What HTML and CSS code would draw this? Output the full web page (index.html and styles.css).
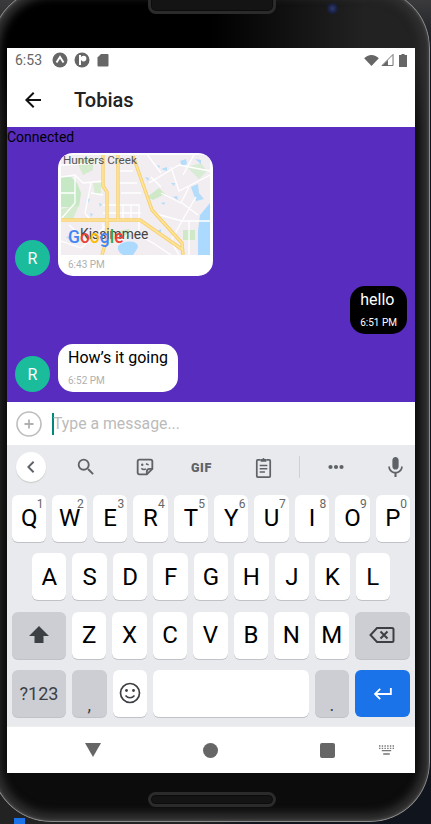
FILE: index.html
```html
<!DOCTYPE html>
<html lang="en">
<head>
<meta charset="utf-8">
<title>Tobias</title>
<link rel="stylesheet" href="styles.css">
</head>
<body>
<div class="device">
  <div class="speaker speaker-top"></div>
  <div class="camera"></div>
  <div class="speaker speaker-bottom"></div>
  <main class="screen">
    <div class="status">
      <span class="clock">6:53</span>
      <svg class="st-ic" viewBox="0 0 16 16"><circle cx="8" cy="8" r="7.5" fill="#666"/><path d="M4.5 10.5 8 5l3.5 5.5" fill="none" stroke="#fff" stroke-width="2"/></svg>
      <svg class="st-ic" viewBox="0 0 16 16"><circle cx="8" cy="8" r="7.5" fill="#666"/><rect x="5" y="3" width="2" height="10" fill="#fff"/><circle cx="9.6" cy="6.600" r="2.800" fill="#fff"/></svg>
      <svg class="st-ic st-sd" viewBox="0 0 14 14"><path d="M5 1h6.500a1 1 0 0 1 1 1v10.500a1 1 0 0 1-1 1h-9a1 1 0 0 1-1-1V4.500z" fill="#666"/></svg>
      <span class="status-fill"></span>
      <svg class="st-wifi" viewBox="0 0 16 12"><path d="M8 12 0 3.5C2 1.5 4.8 0 8 0s6 1.500 8 3.500z" fill="#666"/></svg>
      <svg class="st-signal" viewBox="0 0 13 13"><path d="M12.500 .5v12H.5z" fill="none" stroke="#666"/><path d="M7 6.500V13H.5z" fill="#666"/></svg>
      <svg class="st-batt" viewBox="0 0 8 13"><path d="M2.500 0h3v1H8v12H0V1h2.500z" fill="#666"/></svg>
    </div>
    <header class="appbar">
      <svg class="back" viewBox="0 0 24 24"><path d="M20 11H7.830l5.590-5.590L12 4l-8 8 8 8 1.410-1.410L7.830 13H20v-2z"/></svg>
      <h1 class="title">Tobias</h1>
    </header>
    <section class="chat">
      <div class="connected">Connected</div>
      <div class="msg msg-first">
        <div class="avatar">R</div>
        <div class="bubble bubble-map">
          <svg class="map" viewBox="0 2 149 100">
            <rect x="0" y="0" width="149" height="102" fill="#f2edf1"/>
            <path d="M0 24h10l6 6 4 10-2 14H0z" fill="#c7e8c4"/>
            <path d="M14 5h18v12L22 22z" fill="#d5ebcd"/>
            <path d="M32 30h8v10l-6 2z" fill="#d8ecd2"/>
            <path d="M86 44l12-9 6 6-12 6z" fill="#cfe9c8"/>
            <path d="M126 14l14-4 6 8-8 8z" fill="#d8ecd5"/>
            <path d="M0 56 18 52 12 66H0z" fill="#d5ebcd"/>
            <path d="M58 78l10-2 2 8-10 2z" fill="#cfe9c8"/>
            <path d="M149 50 139 62 137 78 137 102H149z" fill="#acdafe"/>
            <path d="M57 93q6-6 16-4 6 3 3 7l-4 6H62q-6-3-5-9z" fill="#acdafe"/>
            <path d="M130 34l7-3 1 9 5 6-8 2z" fill="#b4dcfb"/>
            <path d="M100 16l6-2v4zM112 44l4-1 1 4zM26 45l3 1-2 4zM84 24l4 1-1 3zM5 84l4-1v4zM96 78l4-2v4zM134 6l6 1v4zM38 50l3 1-2 3zM119 8l6-2 1 5-5 2zM110 30l4 0-1 3zM29 60l3 1-2 3zM96 12l3 1-1 2zM100 50l4-1-1 3z" fill="#b4dcfb"/>
            <path d="M122 77h12v10h-12z" fill="#cfe8c8"/>
            <g class="roads">
              <path d="M0 24 14 22 22 30 42 28M14 22V50L0 66M30 30 24 60 30 68M57 30H76M42 52H78V80M42 60H80M42 70V102M30 68H0M62 52V67M70 52V67M20 95 46 72M88 30 118 12 149 18M110 14 118 38 149 22M100 40 120 50 128 34M121 68H149M121 68 110 88 118 102M121 68 135 44M60 88 70 78 92 90 110 102M0 40 14 40M85 0 100 20M134 0 122 22M0 12 40 10M57 18H72M92 60 121 68M128 68V102M100 34 90 24M8 72 28 90M0 88 20 95M60 40H80M30 40 42 42M137 62 121 50"/>
            </g>
            <g class="hw">
              <path d="M42 0V33L46 39V85L41 102M57 0V67M72 3 91 57 121 90 122 102M0 67H79L122 97"/>
            </g>
            <g class="hw-in">
              <path d="M42 0V33L46 39V85L41 102M57 0V67M72 3 91 57 121 90 122 102M0 67H79L122 97"/>
            </g>
            <text class="map-small" x="2" y="11">Hunters Creek</text>
            <text class="map-big" x="19" y="86">Kissimmee</text>
            <text class="map-logo" x="7" y="90"><tspan fill="#4285f4">G</tspan><tspan fill="#ea4335">o</tspan><tspan fill="#fbbc05">o</tspan><tspan fill="#4285f4">g</tspan><tspan fill="#34a853">l</tspan><tspan fill="#ea4335">e</tspan></text>
          </svg>
          <div class="time time-map">6:43 PM</div>
        </div>
      </div>
      <div class="msg msg-mine">
        <div class="bubble bubble-mine">
          <div class="text">hello</div>
          <div class="time">6:51 PM</div>
        </div>
      </div>
      <div class="msg">
        <div class="avatar">R</div>
        <div class="bubble">
          <div class="text">How’s it going</div>
          <div class="time">6:52 PM</div>
        </div>
      </div>
    </section>
    <div class="composer">
      <svg class="plus" viewBox="0 0 26 26"><circle cx="13" cy="13" r="12" fill="none" stroke="#bdbdbd" stroke-width="1.600"/><path d="M13 8.500v9M8.500 13h9" stroke="#b0b0b0" stroke-width="1.800"/></svg>
      <span class="caret"></span>
      <span class="placeholder">Type a message...</span>
    </div>
    <section class="keyboard">
      <div class="tools">
        <div class="tool-back"><svg class="tool-chev" viewBox="0 0 12 16"><path d="M9 2 3 8l6 6" fill="none" stroke="#5f6368" stroke-width="2.200"/></svg></div>
        <svg class="tool tool-search" viewBox="0 0 24 24"><path d="M15.500 14h-.79l-.28-.27A6.471 6.471 0 0 0 16 9.500 6.500 6.500 0 1 0 9.500 16c1.610 0 3.090-.59 4.230-1.570l.27.28v.79l5 4.990L20.490 19l-4.990-5zm-6 0C7.010 14 5 11.990 5 9.500S7.010 5 9.500 5 14 7.010 14 9.500 11.990 14 9.500 14z" fill="#5f6368"/></svg>
        <svg class="tool tool-sticker" viewBox="0 0 24 24"><path d="M6 4h12a2 2 0 0 1 2 2v8l-6 6H6a2 2 0 0 1-2-2V6a2 2 0 0 1 2-2z" fill="none" stroke="#5f6368" stroke-width="2"/><path d="M14 20v-3a3 3 0 0 1 3-3h3" fill="none" stroke="#5f6368" stroke-width="2"/><circle cx="9" cy="9.500" r="1.300" fill="#5f6368"/><path d="M13 8.500l3 1.200M8 13.500c2 1.500 3.500 1.500 5 .5" fill="none" stroke="#5f6368" stroke-width="1.700"/></svg>
        <span class="tool-gif">GIF</span>
        <svg class="tool tool-clip" viewBox="0 0 24 24"><path d="M9 4H6a1 1 0 0 0-1 1v16a1 1 0 0 0 1 1h12a1 1 0 0 0 1-1V5a1 1 0 0 0-1-1h-3" fill="none" stroke="#5f6368" stroke-width="1.800"/><path d="M9 5V3h2a1 1 0 0 1 2 0h2v3H9zM8 9h8v1.600H8zM8 12.500h8v1.600H8zM8 16h5.500v1.600H8z" fill="#5f6368"/></svg>
        <span class="tool-div"></span>
        <svg class="tool-dots" viewBox="0 0 16 6"><circle cx="2.500" cy="3" r="2.100"/><circle cx="8" cy="3" r="2.100"/><circle cx="13.500" cy="3" r="2.100"/></svg>
        <svg class="tool tool-mic" viewBox="0 0 24 24"><path d="M12 14c1.660 0 3-1.340 3-3V5c0-1.660-1.340-3-3-3S9 3.340 9 5v6c0 1.660 1.340 3 3 3zm5.300-3c0 3-2.540 5.100-5.300 5.100S6.700 14 6.700 11H5c0 3.410 2.720 6.230 6 6.720V21h2v-3.280c3.280-.48 6-3.300 6-6.720h-1.700z" fill="#5f6368"/></svg>
      </div>
      <div class="row">
        <div class="key">Q<sup class="num">1</sup></div>
        <div class="key">W<sup class="num">2</sup></div>
        <div class="key">E<sup class="num">3</sup></div>
        <div class="key">R<sup class="num">4</sup></div>
        <div class="key">T<sup class="num">5</sup></div>
        <div class="key">Y<sup class="num">6</sup></div>
        <div class="key">U<sup class="num">7</sup></div>
        <div class="key">I<sup class="num">8</sup></div>
        <div class="key">O<sup class="num">9</sup></div>
        <div class="key">P<sup class="num">0</sup></div>
      </div>
      <div class="row row-home">
        <div class="key">A</div><div class="key">S</div><div class="key">D</div><div class="key">F</div><div class="key">G</div><div class="key">H</div><div class="key">J</div><div class="key">K</div><div class="key">L</div>
      </div>
      <div class="row">
        <div class="key key-fn key-wide"><svg class="k-ic" viewBox="0 0 24 24"><path d="M12 3 2 13h5.500v7h9v-7H22z" fill="#3c4043"/></svg></div>
        <div class="key">Z</div><div class="key">X</div><div class="key">C</div><div class="key">V</div><div class="key">B</div><div class="key">N</div><div class="key">M</div>
        <div class="key key-fn key-wide-r"><svg class="k-ic k-back" viewBox="0 0 26 20"><path d="M8 3h15a1.500 1.500 0 0 1 1.500 1.500v11A1.500 1.500 0 0 1 23 17H8l-6.500-7z" fill="none" stroke="#3c4043" stroke-width="2"/><path d="M11.500 6.500l7 7M18.500 6.500l-7 7" stroke="#3c4043" stroke-width="2"/></svg></div>
      </div>
      <div class="row">
        <div class="key key-fn key-wide key-sym">?123</div>
        <div class="key key-fn key-punct">,</div>
        <div class="key"><svg class="k-emoji" viewBox="0 0 24 24"><circle cx="12" cy="12" r="9.500" fill="none" stroke="#3c4043" stroke-width="1.700"/><circle cx="8.500" cy="9.500" r="1.400" fill="#3c4043"/><circle cx="15.500" cy="9.500" r="1.400" fill="#3c4043"/><path d="M7.500 14.500c2.500 3 6.500 3 9 0" fill="none" stroke="#3c4043" stroke-width="1.600"/></svg></div>
        <div class="key key-space"></div>
        <div class="key key-fn key-punct">.</div>
        <div class="key key-enter key-wide-r"><svg class="k-enter" viewBox="0 0 20 14"><path d="M19 1v6.500H3M7.500 2 2 7.500 7.500 13" fill="none" stroke="#fff" stroke-width="2"/></svg></div>
      </div>
    </section>
    <nav class="navbar">
      <svg class="nav-tri" viewBox="0 0 16 14"><path d="M0 0h16L8 14z" fill="#666"/></svg>
      <span class="nav-dot"></span>
      <span class="nav-sq"></span>
      <svg class="nav-kb" viewBox="0 0 16 10"><path d="M0 0h1.500v1.500H0zM2.900 0h1.500v1.500H2.900zM5.800 0h1.500v1.500H5.800zM8.700 0h1.500v1.500H8.700zM11.600 0h1.500v1.500h-1.500zM14.500 0H16v1.500h-1.500zM0 2.500h1.500V4H0zM2.900 2.500h1.500V4H2.900zM5.800 2.500h1.500V4H5.800zM8.700 2.500h1.500V4H8.700zM11.600 2.500h1.500V4h-1.500zM14.500 2.500H16V4h-1.500zM3 5h10v1.200H3zM4.500 8.500h7V10h-7z" fill="#777"/></svg>
    </nav>
  </main>
</div>
</body>
</html>
```
FILE: styles.css
```css
* { box-sizing: border-box; }
html, body { margin: 0; height: 100%; overflow: hidden; }
body {
  position: relative;
  width: 431px;
  height: 824px;
  background:
    linear-gradient(180deg, #3a3a3c 0, transparent 60px),
    linear-gradient(90deg, #222 0, #222 45%, #0f141d 60%);
  font-family: Roboto, "Liberation Sans", sans-serif;
}
body::before {
  content: "";
  position: absolute;
  left: 14px;
  bottom: 0;
  width: 11px;
  height: 6px;
  background: #1a73e8;
}

/* device frame */
.device {
  position: relative;
  width: 439px;
  height: 834px;
  margin: -12px 0 0 -9px;
  padding: 60px 0 0 16px;
  border-radius: 60px;
  background:
    linear-gradient(180deg, transparent 70px, #0c0c0c 140px),
    linear-gradient(90deg, #000 50%, #222 85%, #222 100%);
  box-shadow: inset 0 0 0 1px #8a8a8a, inset 0 0 3px 2px #4a4a4a, inset 0 0 8px 9px #303030;
}
.speaker {
  position: absolute;
  left: 157px;
  width: 128px;
  border-radius: 8px;
  background: #141414;
  border: 3px solid #2b2b2b;
  box-shadow: inset 0 0 0 1px #0c0c0c;
}
.speaker-top { top: 0; height: 26px; }
.speaker-bottom { top: 804px; height: 15px; }
.camera {
  position: absolute;
  left: 336px;
  top: 15px;
  width: 11px;
  height: 11px;
  border-radius: 50%;
  background: radial-gradient(circle, #2c3a6c 0, #1a2040 55%, #16181f 100%);
}

/* screen */
.screen {
  width: 408px;
  height: 725px;
  display: flex;
  flex-direction: column;
  background: #fff;
  position: relative;
  z-index: 1;
}

.status {
  height: 24px;
  display: flex;
  align-items: center;
  padding: 0 8px;
  color: #666;
  font-size: 14px;
}
.clock { width: 37px; }
.st-ic { width: 16px; height: 16px; margin-right: 6px; }
.st-sd { width: 14px; height: 14px; }
.status-fill { flex: 1; }
.st-wifi { width: 15px; height: 11px; margin-right: 2px; }
.st-signal { width: 13px; height: 12px; margin-right: 5px; }
.st-batt { width: 8px; height: 13px; }

.appbar {
  height: 55px;
  display: flex;
  align-items: center;
  padding-left: 14px;
}
.back { width: 24px; height: 24px; fill: #111; }
.title {
  margin: 0 0 0 29px;
  font-size: 20px;
  font-weight: 500;
  color: #222;
}

/* chat */
.chat {
  height: 275px;
  background: #572cbf;
  padding: 0 8px;
  display: flex;
  flex-direction: column;
}
.connected {
  height: 20px;
  line-height: 20px;
  margin-left: -8px;
  font-size: 14px;
  color: #000;
}
.msg {
  display: flex;
  align-items: flex-end;
  gap: 8px;
  margin-top: 10px;
}
.msg-first { margin-top: 6px; }
.msg-mine { justify-content: flex-end; }
.avatar {
  width: 35px;
  height: 36px;
  border-radius: 50%;
  background: #1abc9c;
  color: #fff;
  font-size: 16px;
  display: flex;
  align-items: center;
  justify-content: center;
}
.bubble {
  background: #fff;
  border-radius: 15px;
  padding: 4px 10px;
  color: #000;
}
.bubble-mine { background: #000; color: #fff; }
.bubble-map { padding: 2px 3px 4px; width: 155px; overflow: hidden; }
.text { font-size: 16px; line-height: 20px; }
.time {
  margin-top: 6px;
  font-size: 10px;
  line-height: 14px;
  color: #b0b0b0;
}
.bubble-mine .time { color: #fff; }
.time-map { margin-top: 3px; padding-left: 7px; }

.map { display: block; width: 149px; height: 100px; }
.roads path { fill: none; stroke: #fff; stroke-width: 1.300; }
.hw path { fill: none; stroke: #f6cf6c; stroke-width: 3.400; stroke-linejoin: round; }
.hw-in path { fill: none; stroke: #ffe49a; stroke-width: 1.600; stroke-linejoin: round; }
.map-small { font-family: Roboto, sans-serif; font-size: 11.700px; fill: #555; }
.map-big { font-family: Roboto, sans-serif; font-size: 13.800px; fill: #444; }
.map-logo { font-family: Roboto, sans-serif; font-size: 17.500px; font-weight: 500; }

/* composer */
.composer {
  height: 43px;
  display: flex;
  align-items: center;
  padding-left: 9px;
  background: #fff;
}
.plus { width: 26px; height: 26px; margin-right: 10px; }
.caret { width: 2px; height: 22px; background: #00897b; }
.placeholder { margin-left: -1px; font-size: 15.800px; color: #bbb; }

/* keyboard */
.keyboard {
  height: 281px;
  background: #e8eaed;
  padding: 0 5px 9px;
  display: flex;
  flex-direction: column;
  gap: 11.330px;
}
.tools {
  height: 38.670px;
  display: flex;
  align-items: center;
  padding: 6px 0 0 4px;
}
.tool-back {
  flex: none;
  width: 30px;
  height: 30px;
  border-radius: 50%;
  background: #fff;
  box-shadow: 0 1px 1px #c8c8c8;
  display: flex;
  align-items: center;
  justify-content: center;
}
.tool-chev { width: 12px; height: 14px; }
.tool { flex: none; }
.tool-search { width: 22px; height: 22px; margin-left: 29px; }
.tool-sticker { width: 22px; height: 22px; margin-left: 37px; }
.tool-gif { flex: none; width: 24px; margin-left: 35px; font-size: 12.500px; font-weight: 900; color: #5f6368; letter-spacing: .6px; }
.tool-clip { width: 23px; height: 23px; margin-left: 36.500px; }
.tool-div { flex: none; width: 1px; height: 22px; background: #cfd1d4; margin-left: 24.500px; }
.tool-dots { flex: none; width: 16px; height: 6px; margin-left: 28px; fill: #5f6368; }
.tool-mic { width: 25px; height: 25px; margin-left: 38.500px; }

.row {
  height: 47px;
  display: flex;
  gap: 6px;
}
.row-home { padding: 0 20px; }
.key {
  position: relative;
  flex: 1 1 0;
  min-width: 0;
  border-radius: 6px;
  background: #fff;
  box-shadow: 0 1px 0 #c0c2c7;
  color: #000;
  font-size: 24px;
  display: flex;
  align-items: center;
  justify-content: center;
}
.num {
  position: absolute;
  top: 3px;
  right: 3px;
  font-size: 12px;
  line-height: 12px;
  color: #666;
}
.key-wide { flex: 0 0 54px; }
.key-wide-r { flex: 0 0 55px; }
.key-fn { background: #ccced4; }
.key-space { flex: 0 0 155.500px; }
.key-enter { background: #1a73e8; box-shadow: none; }
.key-sym { font-size: 18px; color: #3c4043; }
.key-punct { font-size: 18px; padding-top: 22px; color: #3c4043; }
.k-ic { width: 24px; height: 24px; }
.k-back { width: 26px; height: 20px; }
.k-enter { width: 19px; height: 13px; }
.k-emoji { width: 24px; height: 24px; }

/* navigation */
.navbar {
  height: 47px;
  display: flex;
  align-items: center;
  background: #fff;
  padding-left: 78px;
  border-top: 1px solid #eeeeee;
}
.nav-tri { width: 16px; height: 14px; }
.nav-dot { width: 15px; height: 15px; margin-left: 102px; border-radius: 50%; background: #666; }
.nav-sq { width: 15px; height: 15px; margin-left: 102px; border-radius: 2px; background: #666; }
.nav-kb { width: 15px; height: 10px; margin-left: 44px; }
```
